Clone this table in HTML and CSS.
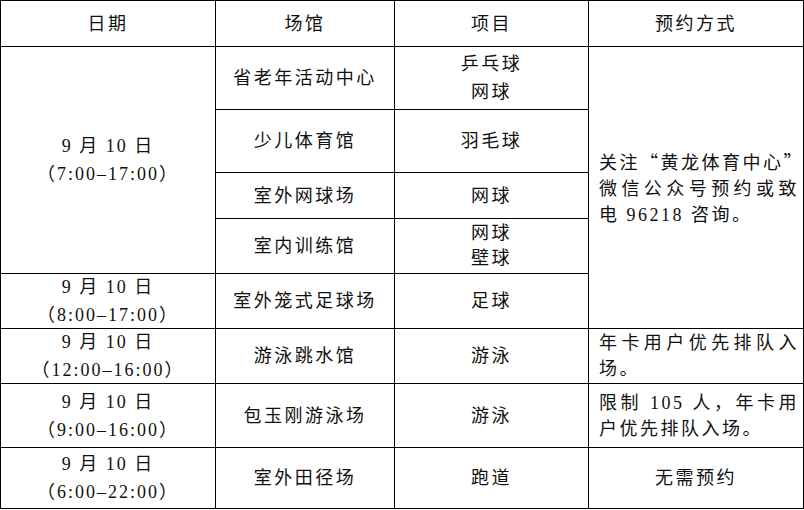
FILE: index.html
```html
<!DOCTYPE html>
<html lang="zh-CN">
<head>
<meta charset="utf-8">
<title>场馆开放安排</title>
<link rel="stylesheet" href="styles.css">
</head>
<body>
<table class="sched">
  <colgroup>
    <col class="c1"><col class="c2"><col class="c3"><col class="c4">
  </colgroup>
  <thead>
    <tr class="rh"><th>日期</th><th>场馆</th><th>项目</th><th>预约方式</th></tr>
  </thead>
  <tbody>
    <tr class="r1">
      <td rowspan="4" class="date">9 月 10 日<br><span class="cjk">（</span>7:00–17:00<span class="cjk">）</span></td>
      <td>省老年活动中心</td>
      <td class="tight28">乒乓球<br>网球</td>
      <td rowspan="5" class="note">
        <span class="jl">关注<span class="cjk">“</span>黄龙体育中心<span class="cjk">”</span></span>
        <span class="jl">微信公众号预约或致</span>
        <span class="ll">电 96218 咨询。</span>
      </td>
    </tr>
    <tr class="r2"><td>少儿体育馆</td><td>羽毛球</td></tr>
    <tr class="r3"><td>室外网球场</td><td>网球</td></tr>
    <tr class="r4"><td>室内训练馆</td><td class="tight25">网球<br>壁球</td></tr>
    <tr class="r5">
      <td class="date">9 月 10 日<br><span class="cjk">（</span>8:00–17:00<span class="cjk">）</span></td>
      <td>室外笼式足球场</td>
      <td>足球</td>
    </tr>
    <tr class="r6">
      <td class="date">9 月 10 日<br><span class="cjk">（</span>12:00–16:00<span class="cjk">）</span></td>
      <td>游泳跳水馆</td>
      <td>游泳</td>
      <td class="note"><span class="jl">年卡用户优先排队入</span><span class="ll">场。</span></td>
    </tr>
    <tr class="r7">
      <td class="date">9 月 10 日<br><span class="cjk">（</span>9:00–16:00<span class="cjk">）</span></td>
      <td>包玉刚游泳场</td>
      <td>游泳</td>
      <td class="note"><span class="jl">限制 105 人，年卡用</span><span class="ll">户优先排队入场。</span></td>
    </tr>
    <tr class="r8">
      <td class="date">9 月 10 日<br><span class="cjk">（</span>6:00–22:00<span class="cjk">）</span></td>
      <td>室外田径场</td>
      <td>跑道</td>
      <td>无需预约</td>
    </tr>
  </tbody>
</table>
</body>
</html>
```

FILE: styles.css
```css
html, body {
  margin: 0;
  padding: 0;
  background: #ffffff;
}

body {
  font-family: "Liberation Serif", "Noto Sans CJK SC", serif;
  font-size: 18px;
  color: #111111;
}

.sched {
  border-collapse: collapse;
  table-layout: fixed;
  width: 803px;
}

.c1 { width: 215px; }
.c2 { width: 179px; }
.c3 { width: 194px; }
.c4 { width: 215px; }

.sched th,
.sched td {
  border: 1px solid #000000;
  padding: 0 4px;
  text-align: center;
  vertical-align: middle;
  font-weight: normal;
  line-height: 26px;
  letter-spacing: 2.5px;
  white-space: nowrap;
}

.sched td.date {
  line-height: 26px;
  letter-spacing: 2px;
}

.cjk {
  font-family: "Noto Sans CJK SC", sans-serif;
}

.rh { height: 46px; }
.r1 { height: 63px; }
.r2 { height: 63px; }
.r3 { height: 46px; }
.r4 { height: 55px; }
.r5 { height: 55px; }
.r6 { height: 55px; }
.r7 { height: 64px; }
.r8 { height: 61px; }

.sched td.tight28 { line-height: 28px; }
.sched td.tight25 { line-height: 25px; }

.sched td.note {
  text-align: left;
  padding: 0 4px 0 10px;
  line-height: 26px;
}

.jl {
  display: block;
  text-align: justify;
  text-align-last: justify;
}

.ll {
  display: block;
  text-align: left;
}
```
